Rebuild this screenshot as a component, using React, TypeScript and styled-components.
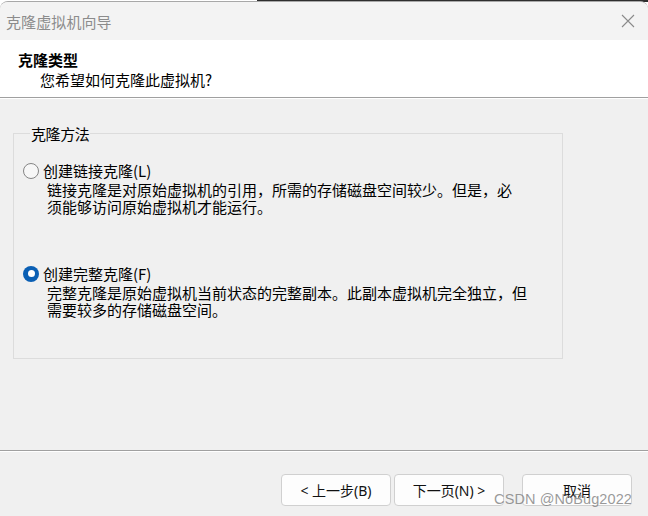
import React from "react";
import styled, { createGlobalStyle } from "styled-components";

const GlobalStyle = createGlobalStyle`
  html, body {
    margin: 0;
    padding: 0;
  }
  body {
    width: 648px;
    height: 516px;
    overflow: hidden;
    background:
      linear-gradient(to right, #ffffff 257px, #2e2e2e 257px) top left / 100% 2px no-repeat,
      #ffffff;
    font-family: "Noto Sans CJK SC", "Noto Sans", sans-serif;
  }
`;

const Window = styled.div`
  position: relative;
  margin-top: 1px;
  width: 648px;
  height: 515px;
  box-sizing: border-box;
  background: #f0f0f0;
  border-top: 1px solid #a8a8a8;
  border-radius: 8px 8px 0 0;
  overflow: hidden;
  display: flex;
  flex-direction: column;
`;

const TitleBar = styled.div`
  height: 38px;
  flex: none;
  background: #f3f3f3;
  display: flex;
  align-items: center;
  justify-content: space-between;
  padding: 0 12px 0 6px;
`;

const TitleText = styled.span`
  font-size: 15px;
  color: #8c8c8c;
  letter-spacing: 0.1px;
`;

const CloseButton = styled.span`
  display: flex;
  align-items: center;
  justify-content: center;
  width: 16px;
  height: 16px;
`;

const Header = styled.div`
  height: 57px;
  flex: none;
  box-sizing: border-box;
  background: #ffffff;
  padding: 10px 16px 0 18px;
  display: flex;
  flex-direction: column;
  gap: 1px;
`;

const HeaderTitle = styled.div`
  font-size: 15px;
  line-height: 19px;
  font-weight: 700;
  color: #000;
`;

const HeaderSub = styled.div`
  font-size: 15px;
  line-height: 19px;
  color: #000;
  padding-left: 22px;
`;

const Separator = styled.div`
  flex: none;
  height: 0;
  border-top: 1px solid #a0a0a0;
  border-bottom: 1px solid #ffffff;
`;

const Body = styled.div`
  flex: 1;
  padding: 26px 0 0 13px;
`;

const GroupBox = styled.fieldset`
  margin: 0;
  width: 550px;
  height: 234px;
  box-sizing: border-box;
  border: 1px solid #dcdcdc;
  padding: 10px 0 0 9px;
  display: flex;
  flex-direction: column;
`;

const Legend = styled.legend`
  font-size: 15px;
  line-height: 17px;
  color: #000;
  padding: 0 1px;
  margin-left: 7px;
  letter-spacing: -0.4px;
`;

const Option = styled.div<{ $gap: number }>`
  display: flex;
  flex-direction: column;
  margin-top: ${(p) => p.$gap}px;
`;

const OptionRow = styled.label`
  display: flex;
  align-items: center;
  gap: 4px;
  height: 17px;
`;

const RadioCircle = styled.span<{ $checked: boolean }>`
  width: 16px;
  height: 16px;
  box-sizing: border-box;
  border-radius: 50%;
  flex: none;
  display: flex;
  align-items: center;
  justify-content: center;
  background: ${(p) => (p.$checked ? "#0a5fb4" : "#f7f7f7")};
  border: ${(p) => (p.$checked ? "none" : "1px solid #858585")};
  &::after {
    content: "";
    display: ${(p) => (p.$checked ? "block" : "none")};
    width: 7px;
    height: 7px;
    border-radius: 50%;
    background: #ffffff;
  }
`;

const OptionLabel = styled.span`
  font-size: 15px;
  line-height: 17px;
  color: #000;
`;

const Desc = styled.div`
  padding-left: 24px;
  margin-top: 2px;
  display: flex;
  flex-direction: column;
`;

const DescLine = styled.span`
  font-size: 15px;
  line-height: 17px;
  color: #000;
  white-space: nowrap;
`;

const Footer = styled.div`
  flex: none;
  height: 66px;
  display: flex;
  flex-direction: column;
`;

const ButtonRow = styled.div`
  display: flex;
  align-items: flex-start;
  padding: 22px 0 0 281px;
`;

const Button = styled.button<{ $ml?: number }>`
  width: 110px;
  height: 32px;
  margin-left: ${(p) => p.$ml ?? 0}px;
  box-sizing: border-box;
  background: #fdfdfd;
  border: 1px solid #d0d0d0;
  border-radius: 4px;
  font-family: "Noto Sans", "Noto Sans CJK SC", sans-serif;
  font-size: 14px;
  color: #111;
  padding: 0;
  display: flex;
  align-items: center;
  justify-content: center;
`;

const Watermark = styled.span`
  position: absolute;
  right: 16px;
  bottom: 9px;
  font-family: "Liberation Sans", Arial, sans-serif;
  font-size: 14.5px;
  color: rgba(120, 120, 120, 0.75);
  pointer-events: none;
  letter-spacing: 0.1px;
`;

const CloseIcon = () => (
  <svg width="14" height="14" viewBox="0 0 14 14">
    <path d="M1 1 L13 13 M13 1 L1 13" stroke="#8a8a8a" strokeWidth="1.1" fill="none" />
  </svg>
);

const Radio = ({ checked, label, lines, gap }: { checked: boolean; label: string; lines: string[]; gap: number }) => (
  <Option $gap={gap}>
    <OptionRow>
      <RadioCircle $checked={checked} />
      <OptionLabel>{label}</OptionLabel>
    </OptionRow>
    <Desc>
      {lines.map((l) => (
        <DescLine key={l}>{l}</DescLine>
      ))}
    </Desc>
  </Option>
);

export default function App() {
  return (
    <>
      <GlobalStyle />
      <Window>
        <TitleBar>
          <TitleText>克隆虚拟机向导</TitleText>
          <CloseButton>
            <CloseIcon />
          </CloseButton>
        </TitleBar>
        <Header>
          <HeaderTitle>克隆类型</HeaderTitle>
          <HeaderSub>您希望如何克隆此虚拟机?</HeaderSub>
        </Header>
        <Separator />
        <Body>
          <GroupBox>
            <Legend>克隆方法</Legend>
            <Radio
              gap={10}
              checked={false}
              label="创建链接克隆(L)"
              lines={["链接克隆是对原始虚拟机的引用，所需的存储磁盘空间较少。但是，必", "须能够访问原始虚拟机才能运行。"]}
            />
            <Radio
              gap={50}
              checked={true}
              label="创建完整克隆(F)"
              lines={["完整克隆是原始虚拟机当前状态的完整副本。此副本虚拟机完全独立，但", "需要较多的存储磁盘空间。"]}
            />
          </GroupBox>
        </Body>
        <Footer>
          <Separator />
          <ButtonRow>
            <Button>&lt; 上一步(B)</Button>
            <Button $ml={3}>下一页(N) &gt;</Button>
            <Button $ml={18}>取消</Button>
          </ButtonRow>
        </Footer>
        <Watermark>CSDN @NoBug2022</Watermark>
      </Window>
    </>
  );
}
